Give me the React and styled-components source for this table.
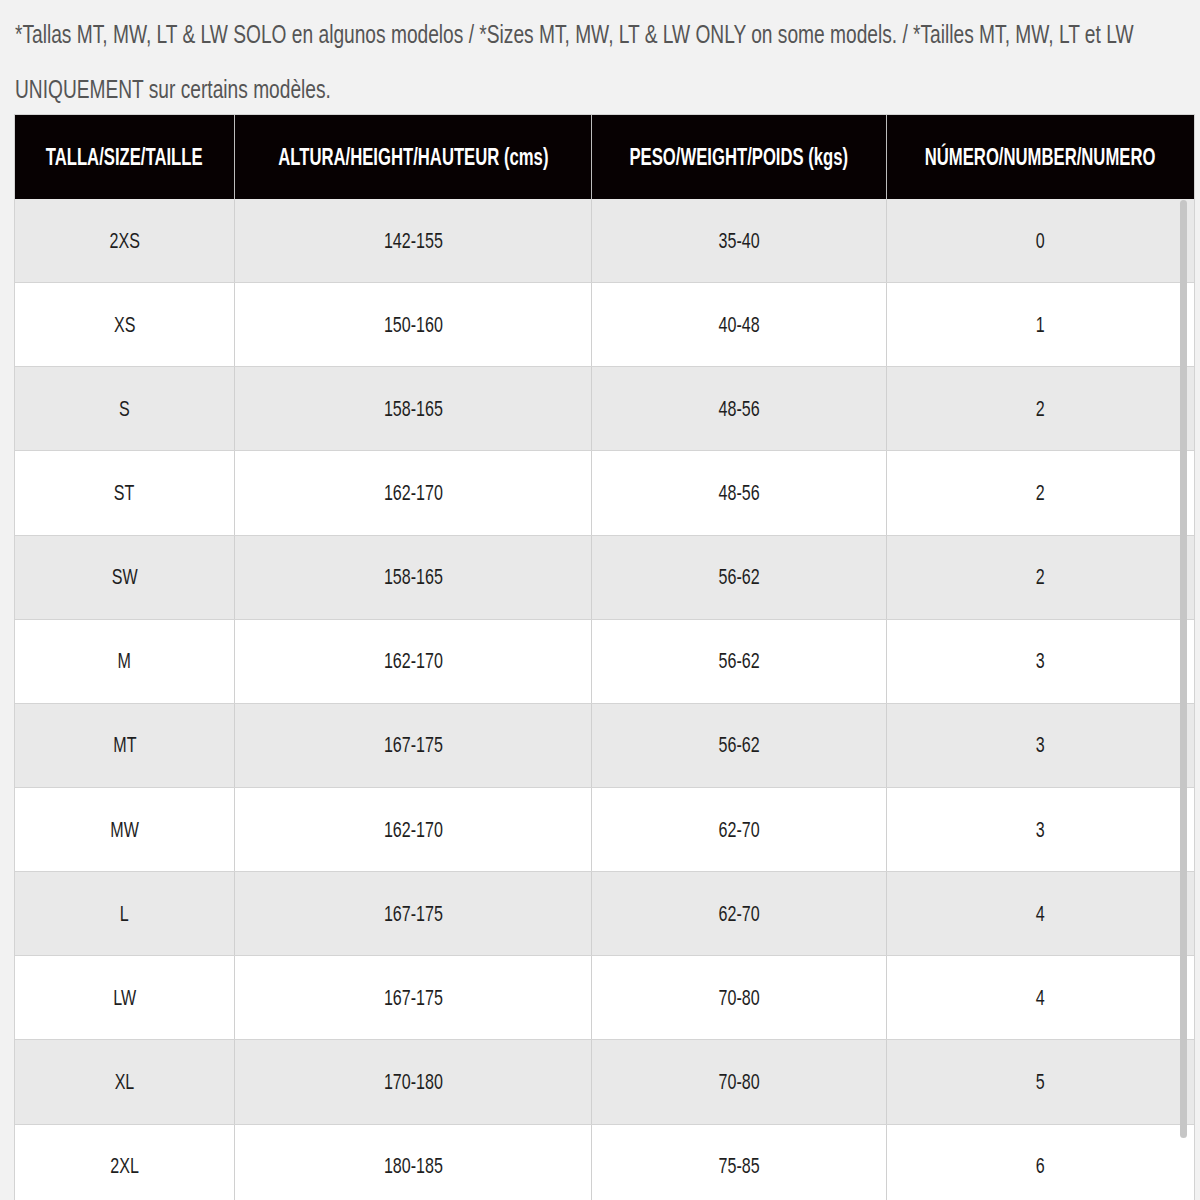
import React from 'react';
import styled, { createGlobalStyle } from 'styled-components';

const rows = [
  ['2XS', '142-155', '35-40', '0'],
  ['XS', '150-160', '40-48', '1'],
  ['S', '158-165', '48-56', '2'],
  ['ST', '162-170', '48-56', '2'],
  ['SW', '158-165', '56-62', '2'],
  ['M', '162-170', '56-62', '3'],
  ['MT', '167-175', '56-62', '3'],
  ['MW', '162-170', '62-70', '3'],
  ['L', '167-175', '62-70', '4'],
  ['LW', '167-175', '70-80', '4'],
  ['XL', '170-180', '70-80', '5'],
  ['2XL', '180-185', '75-85', '6'],
];

const headers = [
  'TALLA/SIZE/TAILLE',
  'ALTURA/HEIGHT/HAUTEUR (cms)',
  'PESO/WEIGHT/POIDS (kgs)',
  'NÚMERO/NUMBER/NUMERO',
];

export default function App() {
  return (
    <Page>
      <GlobalStyle />
      <NoteBox>
        <Note>
          *Tallas MT, MW, LT &amp; LW SOLO en algunos modelos / *Sizes MT, MW, LT &amp; LW ONLY on some models. /
          *Tailles MT, MW, LT et LW UNIQUEMENT sur certains modèles.
        </Note>
      </NoteBox>
      <TableWrap>
        <HeadRow>
          {headers.map((h, i) => (
            <HeadCell key={h} $first={i === 0}>
              <Label>{h}</Label>
            </HeadCell>
          ))}
        </HeadRow>
        {rows.map((r, idx) => (
          <BodyRow key={r[0]} $striped={idx % 2 === 0}>
            {r.map((v, i) => (
              <Cell key={i} $first={i === 0}>
                <Value>{v}</Value>
              </Cell>
            ))}
          </BodyRow>
        ))}
        <ScrollThumb />
      </TableWrap>
    </Page>
  );
}

const GlobalStyle = createGlobalStyle`
  html, body {
    margin: 0;
    padding: 0;
    background: #f2f2f2;
    overflow: hidden;
  }
`;

const Page = styled.div`
  padding-top: 7px;
  font-family: 'Liberation Sans', Arial, sans-serif;
`;

const NoteBox = styled.div`
  width: 1185px;
  padding-left: 15px;
  box-sizing: border-box;
  height: 107px;
`;

const Note = styled.p`
  margin: 0;
  width: 1590px;
  font-size: 26px;
  line-height: 55px;
  color: #555555;
  transform: scaleX(0.737);
  transform-origin: left top;
`;

const TableWrap = styled.div`
  position: relative;
  margin-left: 14px;
  width: 1179px;
  border: 1px solid #d3d3d3;
  border-bottom: none;
`;

const grid = `
  display: grid;
  grid-template-columns: 219px 357px 295px minmax(0, 1fr);
`;

const HeadRow = styled.div`
  ${grid}
  height: 84px;
  background: #070102;
`;

const HeadCell = styled.div`
  display: flex;
  align-items: center;
  justify-content: center;
  min-width: 0;
  border-left: ${(p) => (p.$first ? 'none' : '1px solid #bdbdbd')};
`;

const Label = styled.span`
  display: inline-block;
  flex-shrink: 0;
  white-space: nowrap;
  font-size: 23px;
  font-weight: bold;
  color: #ffffff;
  transform: scaleX(0.725);
`;

const BodyRow = styled.div`
  ${grid}
  height: 83.15px;
  border-bottom: 1px solid #d4d4d4;
  background: ${(p) => (p.$striped ? '#e9e9e9' : '#ffffff')};
`;

const Cell = styled.div`
  display: flex;
  align-items: center;
  justify-content: center;
  min-width: 0;
  border-left: ${(p) => (p.$first ? 'none' : '1px solid #d0d0d0')};
`;

const Value = styled.span`
  display: inline-block;
  white-space: nowrap;
  font-size: 22px;
  color: #1e1e1e;
  transform: scaleX(0.73);
`;

const ScrollThumb = styled.div`
  position: absolute;
  right: 7px;
  top: 85px;
  width: 7px;
  height: 938px;
  border-radius: 4px;
  background: #c6c6c6;
`;
